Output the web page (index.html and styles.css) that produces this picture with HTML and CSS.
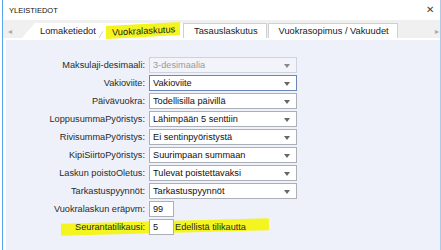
FILE: index.html
```html
<!DOCTYPE html>
<html lang="fi">
<head>
    <meta charset="UTF-8">
    <title>Yleistiedot</title>
    <link rel="stylesheet" href="styles.css">
</head>
<body>
    <div class="window">
        <div class="titlebar">
            <span class="title">YLEISTIEDOT</span>
            <span class="close">&#x2715;</span>
        </div>
        <div class="tabstrip">
            <span class="arrow">&#x25C2;</span>
            <div class="tabs">
                <div class="tab first">Lomaketiedot</div>
                <div class="tab active"><span class="marker">Vuokralaskutus</span></div>
                <div class="tab boxed">Tasauslaskutus</div>
                <div class="tab boxed">Vuokrasopimus / Vakuudet</div>
            </div>
            <span class="arrow right">&#x25B8;</span>
        </div>
        <div class="panel">
            <div class="form">
                <div class="row">
                    <label>Maksulaji-desimaali:</label>
                    <div class="select disabled">3-desimaalia</div>
                </div>
                <div class="row">
                    <label>Vakioviite:</label>
                    <div class="select focus">Vakioviite</div>
                </div>
                <div class="row">
                    <label>Päivävuokra:</label>
                    <div class="select">Todellisilla päivillä</div>
                </div>
                <div class="row">
                    <label>LoppusummaPyöristys:</label>
                    <div class="select">Lähimpään 5 senttiin</div>
                </div>
                <div class="row">
                    <label>RivisummaPyöristys:</label>
                    <div class="select">Ei sentinpyöristystä</div>
                </div>
                <div class="row">
                    <label>KipiSiirtoPyöristys:</label>
                    <div class="select">Suurimpaan summaan</div>
                </div>
                <div class="row">
                    <label>Laskun poistoOletus:</label>
                    <div class="select">Tulevat poistettavaksi</div>
                </div>
                <div class="row">
                    <label>Tarkastuspyynnöt:</label>
                    <div class="select">Tarkastuspyynnöt</div>
                </div>
                <div class="row">
                    <label>Vuokralaskun eräpvm:</label>
                    <div class="input">99</div>
                </div>
                <div class="row marked">
                    <label>Seurantatilikausi:</label>
                    <div class="input">5</div>
                    <span class="hint">Edellistä tilikautta</span>
                </div>
            </div>
        </div>
    </div>
</body>
</html>
```

FILE: styles.css
```css
html, body {
    margin: 0;
    padding: 0;
    background: #fff;
    height: 100%;
    overflow: hidden;
}
body {
    font-family: "Liberation Sans", Arial, sans-serif;
    color: #222;
}
.window {
    margin-left: 2px;
    width: 437px;
    height: 250px;
    border-left: 1px solid #5aa6ee;
    border-right: 2px solid #a9cbec;
    display: flex;
    flex-direction: column;
}
.titlebar {
    height: 20px;
    display: flex;
    align-items: center;
    justify-content: space-between;
    padding: 0 6px 0 6px;
}
.title {
    font-size: 7.5px;
    color: #111;
}
.close {
    font-size: 10px;
    color: #444;
    margin-top: -1px;
}
.tabstrip {
    height: 18px;
    background: #f0f0f0;
    display: flex;
    align-items: flex-end;
}
.arrow {
    font-size: 8px;
    color: #aaa;
    width: 14px;
    padding-left: 5px;
    align-self: center;
    margin-top: 4px;
}
.arrow.right {
    margin-left: auto;
    width: auto;
    padding-left: 0;
    padding-right: 1px;
}
.tabs {
    display: flex;
    align-items: flex-end;
    height: 15px;
}
.tab {
    height: 15px;
    box-sizing: border-box;
    background: #fff;
    font-size: 9.3px;
    color: #1a1a1a;
    display: flex;
    align-items: center;
}
.tab.first {
    width: 81px;
    padding-left: 18px;
    clip-path: polygon(0 100%, 13px 0, 100% 0, 100% 100%);
    position: relative;
}
.tab.first::after {
    content: "";
    position: absolute;
    right: 0;
    top: 3px;
    width: 4px;
    height: 12px;
    border-right: 1px solid #ccc;
    transform: skewX(-30deg);
}
.tab.active {
    width: 80px;
    padding-left: 3px;
}
.marker {
    background: #f4f420;
    padding: 2px 5px 1px 6px;
    transform: skewY(-3deg);
    display: inline-block;
}
.tab.boxed {
    border: 1px solid #d0d0d0;
    border-bottom: none;
    padding: 0 8px 0 10px;
    margin-right: 1px;
}
.panel {
    flex: 1;
    margin: 2px 0 0 3px;
    background: #eef1f9;
    padding-top: 17px;
}
.form {
    display: flex;
    flex-direction: column;
    gap: 2px;
}
.row {
    display: flex;
    align-items: center;
    gap: 4px;
    height: 16px;
    font-size: 9.2px;
}
.row label {
    width: 139px;
    text-align: right;
    color: #2a2a2a;
}
.select, .input {
    box-sizing: border-box;
    height: 16px;
    background: #fff;
    border: 1px solid #abb0b8;
    padding-left: 3px;
    line-height: 14px;
    color: #111;
}
.select {
    width: 148px;
    position: relative;
}
.select::after {
    content: "";
    position: absolute;
    right: 6px;
    top: 6px;
    border-left: 3.5px solid transparent;
    border-right: 3.5px solid transparent;
    border-top: 4px solid #666;
}
.select.disabled {
    border-color: #ccd3df;
    background: #f2f4f9;
    color: #9a9a9a;
}
.select.disabled::after {
    border-top-color: #888;
}
.select.focus {
    border-color: #6b85b8;
}
.input {
    width: 25px;
}
.hint {
    margin-left: -3px;
    color: #2a2a2a;
}
.row.marked {
    position: relative;
    z-index: 0;
}
.row.marked::before {
    content: "";
    position: absolute;
    z-index: -1;
    left: 55px;
    top: 2px;
    width: 208px;
    height: 12px;
    background: #f4f420;
    transform: rotate(-1.5deg);
}
```
